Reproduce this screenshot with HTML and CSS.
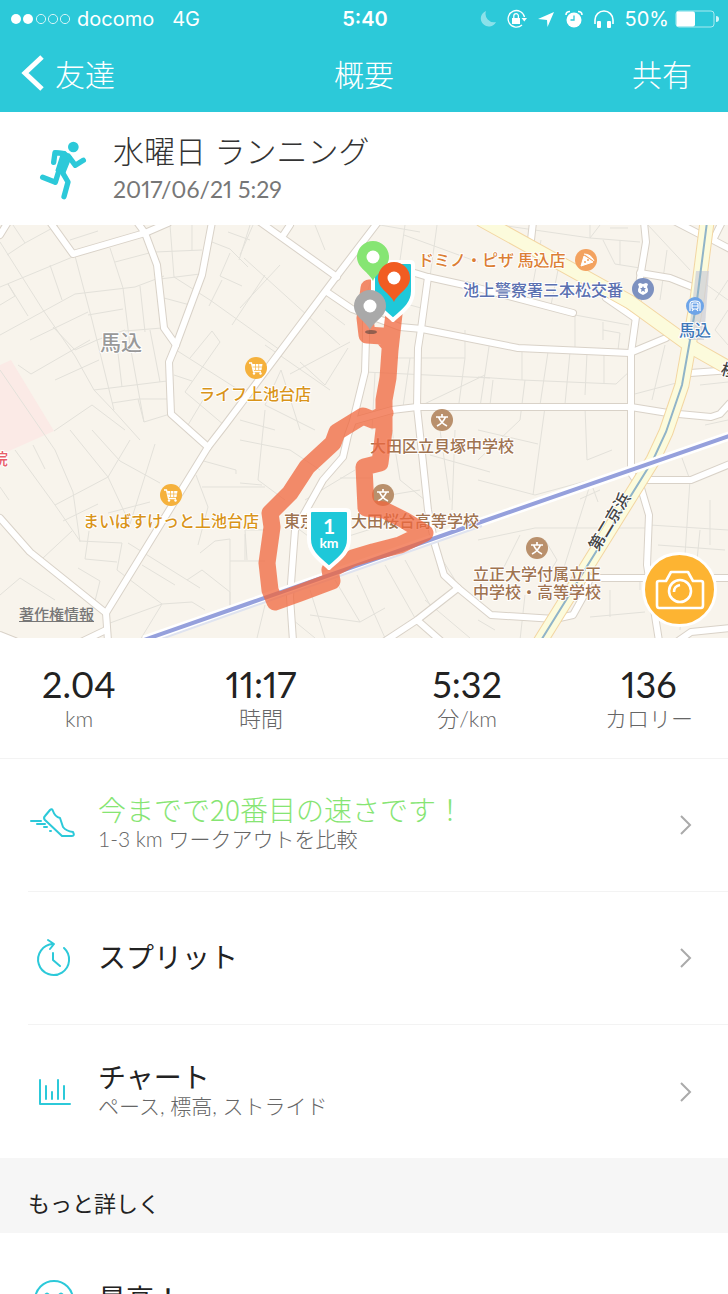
FILE: index.html
```
<!DOCTYPE html>
<html lang="ja">
<head>
    <meta charset="UTF-8">
    <meta name="viewport" content="width=device-width, initial-scale=1.0">
    <title>概要</title>
    <link rel="stylesheet" href="styles.css">
</head>
<body>

    <header class="top-bar">
        <div class="status-bar">
            <div class="status-left">
                <svg class="signal" width="60" height="12" viewBox="0 0 60 12">
                    <circle cx="5" cy="6" r="5" fill="#fff"/>
                    <circle cx="17" cy="6" r="5" fill="#fff"/>
                    <g fill="none" stroke="#fff" stroke-width="1" opacity="0.8">
                        <circle cx="30" cy="6" r="4.6"/>
                        <circle cx="42" cy="6" r="4.6"/>
                        <circle cx="54" cy="6" r="4.6"/>
                    </g>
                </svg>
                <span class="carrier">docomo</span>
                <span>4G</span>
            </div>
            <div class="status-time">5:40</div>
            <div class="status-right">
                <svg width="18" height="20" viewBox="0 0 18 20">
                    <path d="M7 2 A8 8 0 1 0 17 13 A8.500 8.500 0 0 1 7 2 Z" fill="#fff" opacity="0.45"/>
                </svg>
                <svg width="20" height="20" viewBox="0 0 20 20" fill="none" stroke="#fff" stroke-width="1.300">
                    <path d="M17.500 8 A8.300 8.300 0 1 0 15 16"/>
                    <path d="M14.500 9 H20 L17.300 12.500 Z" fill="#fff" stroke="none"/>
                    <rect x="5" y="9" width="8" height="6" fill="#fff" stroke="none"/>
                    <path d="M6.800 9 V7 a2.300 2.300 0 0 1 4.600 0 V9"/>
                </svg>
                <svg width="18" height="20" viewBox="0 0 18 20">
                    <path d="M17 3 L10.500 18 L10 11 L1 10 Z" fill="#fff"/>
                </svg>
                <svg width="18" height="20" viewBox="0 0 18 20">
                    <circle cx="9" cy="11" r="7.500" fill="#fff"/>
                    <path d="M1 6 Q1 2.500 5 2.500 M17 6 Q17 2.500 13 2.500" fill="none" stroke="#fff" stroke-width="1.600"/>
                    <path d="M9 6.500 V11 H5.500" fill="none" stroke="#2cc9d9" stroke-width="1.300"/>
                </svg>
                <svg width="22" height="20" viewBox="0 0 22 20">
                    <path d="M2 15 V11 a9 9 0 0 1 18 0 V15" fill="none" stroke="#fff" stroke-width="1.600"/>
                    <rect x="4" y="12" width="4" height="7" rx="1" fill="#fff"/>
                    <rect x="14" y="12" width="4" height="7" rx="1" fill="#fff"/>
                </svg>
                <span>50%</span>
                <svg width="44" height="18" viewBox="0 0 44 18">
                    <rect x="1" y="1" width="38" height="16" rx="3" fill="none" stroke="#fff" stroke-opacity="0.6"/>
                    <rect x="1.500" y="1.500" width="18.500" height="15" rx="2" fill="#fff"/>
                    <path d="M41 6 a3 3 0 0 1 0 6 Z" fill="#fff" opacity="0.8"/>
                </svg>
            </div>
        </div>
        <nav class="nav-bar">
            <a class="back" href="#">
                <svg width="24" height="38" viewBox="0 0 24 38">
                    <path d="M21 3 L4 19 L21 35" fill="none" stroke="#fff" stroke-width="5"/>
                </svg>
                友達
            </a>
            <h1>概要</h1>
            <button class="share" type="button">共有</button>
        </nav>
    </header>

    <main>
        <section class="workout">
            <svg class="runner" width="50" height="62" viewBox="114 420 150 186">
                <circle cx="220" cy="441" r="16" fill="#2cc9d9"/>
                <path d="M166 451 L196 453 L216 470 L196 520 L166 512 L182 462 Z" fill="#2cc9d9"/>
                <g fill="none" stroke="#2cc9d9" stroke-width="16" stroke-linecap="round" stroke-linejoin="round">
                    <path d="M161 487 L165 458 L190 461"/>
                    <path d="M205 468 L226 496 L250 481"/>
                    <path d="M182 508 L204 546 L192 590"/>
                    <path d="M178 508 L166 547 L128 532"/>
                </g>
            </svg>
            <div class="workout-text">
                <h2>水曜日 ランニング</h2>
                <p>2017/06/21 5:29</p>
            </div>
        </section>

        <section class="map">
            <svg class="map-canvas" viewBox="0 225 728 413" preserveAspectRatio="xMidYMid slice">
                <defs>
                    <g id="cart">
                        <circle r="11" fill="#f5b13c"/>
                        <path d="M-7 -5 H-4.500 L-2.500 3.500 H5" fill="none" stroke="#fff" stroke-width="1.300"/>
                        <path d="M-4 -4 H6.500 L5.500 2 H-2.700 Z" fill="#fff"/>
                        <path d="M-3.500 -1 H6 M-0.500 -4 V2 M2.700 -4 V2" stroke="#f5b13c" stroke-width="0.700"/>
                        <circle cx="-2" cy="5.500" r="1.200" fill="#fff"/>
                        <circle cx="4.500" cy="5.500" r="1.200" fill="#fff"/>
                    </g>
                    <g id="school">
                        <circle r="11" fill="#b9906c"/>
                        <path d="M-6 -3 H6 M0 -6 V-3 M-3.500 -3 Q-1 3 5 6 M3.500 -3 Q1 3 -5 6" fill="none" stroke="#fff" stroke-width="1.700"/>
                    </g>
                    <g id="pin">
                        <path d="M0 24 C-4 15 -16 11 -16 0 A16 16 0 0 1 16 0 C16 11 4 15 0 24 Z"/>
                        <circle r="6.500" fill="#fff"/>
                    </g>
                    <path id="shield" d="M-17 -30 H17 Q20 -30 20 -27 V-1 C20 14 7 21 0 28 C-7 21 -20 14 -20 -1 V-27 Q-20 -30 -17 -30 Z" fill="#1ec8d9" stroke="#fff" stroke-width="4" stroke-linejoin="round"/>

                    <!-- main streets, drawn twice for casing and fill -->
                    <g id="streets">
                        <path d="M50 222 L73 254 L145 233 L168 223"/>
                        <path d="M137 222 L145 233 L157 265 L164 328 L176 345"/>
                        <path d="M212 222 L202 275 L176 345 L169 362 L171 414 L208 447"/>
                        <path d="M378 222 L336 277 L225 425 L208 447 L106 613 L108 641"/>
                        <path d="M0 518 L30 552 L106 613 M106 630 L83 641 M8 222 L0 235 M0 635 L15 641"/>
                        <path d="M260 222 L337 277 M290 225 L282 237"/>
                        <path d="M327 292 L352 309 L400 327 L422 329 L518 348 L630 353 L666 338"/>
                        <path d="M395 267 L428 277 L478 288 L573 313"/>
                        <path d="M428 277 L421 329 L418 348 L417 407 L420 435 L428 510 L435 545 L444 575 L458 588 L491 615 L555 619 L573 615 L583 597 L590 578 H728"/>
                        <path d="M458 588 L417 620 L385 641 M417 620 L441 641"/>
                        <path d="M366 300 V338 L365 372 L353 421 L348 435 L343 457 L323 480 L295 530 L290 597 L293 641"/>
                        <path d="M353 421 L392 410 L417 407 H631 L668 413 L711 417 L720 414 L730 403"/>
                        <path d="M644 222 L646 242 L640 278 L636 317 L631 353 V473 L641 488 L649 515 L647 565 L659 641"/>
                        <path d="M606 298 L635 318 M640 273 L670 278 L695 288 M531 240 L533 222"/>
                        <path d="M676 222 L705 237 M722 222 L713 240 L730 249 M690 373 L730 370"/>
                        <path d="M648 480 H691 L730 464 M678 641 L691 632 L730 628"/>
                    </g>
                    <g id="highways">
                        <path d="M482 220 L630 302 L695 349 L732 370"/>
                        <path d="M707 222 L697 300 L690 340 L682 385 L666 432 L653 460 L540 642"/>
                    </g>
                </defs>

                <rect x="0" y="225" width="728" height="413" fill="#f8f4ec"/>
                <path d="M0 365 L11 360 L54 431 L0 455 Z" fill="#fbeae6"/>

                <g class="lanes">
                    <path d="M7 255 L25 243 L58 225 M13 225 L25 243 M0 242 L43 310 L75 356 L94 390 L113 410 L140 440 M0 287 L75 256 M50 265 L62 300 M75 256 L92 320 L114 410"/>
                    <path d="M0 335 L75 294 L135 287 L164 276 M0 305 L15 296 L8 284 M8 284 L28 316 M30 340 L88 312 M53 327 L75 350 L97 340 L125 330 M110 248 L123 288 L130 345 L144 422 M70 240 L98 231"/>
                    <path d="M115 262 L153 252 M88 315 L123 309 M140 286 L145 332 M125 331 L162 328 M150 330 L160 382 M55 380 L99 360 M18 365 L31 374 L90 340 M94 390 L167 381 M117 345 L122 387 M112 403 L138 399 L144 422 L170 414 M138 399 L167 399"/>
                    <path d="M170 225 L174 277 M192 225 V250 M155 252 L202 250 M160 279 L200 274 M174 277 L210 300 L280 350 M164 298 L190 305 M212 242 L230 249 L248 267 M230 253 L220 276 L242 286 M222 280 L209 306 M250 225 L239 260 M232 325 L265 275 M228 232 L250 240"/>
                    <path d="M176 350 L250 397 M190 358 L212 331 L220 342 L185 392 L224 425 M174 375 L192 381 M185 430 L203 400 M0 370 L55 450 L73 492 L80 542 M15 450 L55 505 L80 541 L122 543 M55 505 L108 477 L130 440 M54 431 L92 405 L125 430"/>
                    <path d="M33 445 L45 469 M0 487 L9 500 M63 521 L98 504 M70 430 L108 477 L130 524 L155 444 M92 430 L120 461 L160 483 M108 513 L150 502 M43 558 L72 531 M89 531 L85 559 L117 562 M78 568 L100 581 L94 605 M122 543 L117 570 L162 604 L192 602 L205 610"/>
                    <path d="M142 565 L175 585 M128 543 L200 588 M187 580 L202 570 L230 592 V605 M200 553 L215 541 L230 539 V608 M230 561 H265 M245 534 V560 M196 475 L208 507 L198 545 M202 487 H265 M200 460 L236 470 V474 M110 623 L162 604 L140 640 M0 595 L20 578 L55 600"/>
                    <path d="M240 308 L280 265 M244 258 L340 345 M253 225 L240 255 M265 225 L330 270 M265 345 L330 390 M290 374 L350 342 M348 348 L325 385 L300 362 M300 430 L281 370 M281 370 L265 405 L315 430 M240 420 L275 430 M345 325 L325 310 M315 225 L325 250"/>
                    <path d="M405 225 L400 260 M437 225 L430 277 M404 235 L478 262 M380 225 L420 232 M373 275 L361 310 M410 305 L421 308 M395 358 H465 M365 372 L490 378 M418 407 L485 375 M465 330 V358 L459 403 M372 430 L375 373 M480 407 L490 340 M410 358 L403 407"/>
                    <path d="M500 225 L590 238 L640 242 M590 225 V238 M610 228 H628 M620 240 V265 M603 240 L615 264 L640 268 M590 238 L600 225 M541 240 L530 300 M560 260 L550 310 M575 315 L629 325 M603 322 V340 M603 330 L620 333 L618 350 M575 313 V350"/>
                    <path d="M478 377 L522 380 L616 384 L631 370 M522 350 V380 M548 352 L540 405 M570 352 L565 404 M587 353 L585 395 M604 354 V384 M490 405 L493 380 M525 380 L520 420 L478 460 M545 407 L533 495 M585 407 L587 460 L612 450 M631 395 L680 382 M665 345 L652 400"/>
                    <path d="M715 300 L728 280 M660 300 L667 250 M648 225 L690 270 M700 280 L728 300 M728 310 L715 330 L728 345 M700 385 L728 382 M705 425 L728 420 M682 458 L690 480 L680 630 M650 525 L728 530 M710 500 V545 M700 530 L695 580 M658 545 L725 550"/>
                    <path d="M478 540 L535 528 H645 M478 480 L535 495 L590 480 L598 502 M590 485 L560 580 M520 535 L500 575 M545 540 L557 560 L545 580 M580 499 L600 490 M478 430 L538 444 M525 595 L520 640 M610 590 V617 M590 617 L645 612 M640 578 V590 M478 620 L495 630"/>
                    <path d="M240 440 L290 450 L320 470 M265 410 L258 480 L285 500 M240 483 L262 485 M305 500 L355 470 M340 478 H372 M378 497 L420 490 M392 430 L400 480 L425 500 M440 430 L450 500 M455 430 L452 510 M430 455 L490 472 M300 530 L320 545 L400 520"/>
                    <path d="M247 560 L245 530 H265 M310 590 L325 638 M335 580 L360 622 L310 615 M357 575 L385 638 M385 565 L415 618 M405 560 L430 605 M435 548 L455 580 M293 620 L315 638 M265 605 L257 638 M360 622 L385 608 M425 600 L470 638"/>
                </g>

                <use href="#streets" class="street-casing"/>
                <use href="#streets" class="street-fill"/>
                <use href="#highways" class="highway-casing"/>
                <use href="#highways" class="highway-fill"/>
                <path d="M696 271 H709 L704 340 H688 Z" fill="#cfd0d8" opacity="0.75"/>
                <path d="M707 222 L697 300 L690 340 L682 385 L666 432 L653 460 L540 642" fill="none" stroke="#90b4c8" stroke-width="2"/>

                <path d="M144 640 L250 603 L478 523 L732 435" fill="none" stroke="#fff" stroke-width="9"/>
                <path d="M150 643 L254 606 L482 526" fill="none" stroke="#dfe3ef" stroke-width="2"/>
                <path d="M144 640 L250 603 L478 523 L732 435" fill="none" stroke="#95a0dc" stroke-width="4"/>

                <use href="#cart" x="256" y="368"/>
                <use href="#cart" x="171" y="495"/>
                <use href="#school" x="442" y="420"/>
                <use href="#school" x="383" y="495"/>
                <use href="#school" x="537" y="548"/>
                <g transform="translate(586 260)">
                    <circle r="11" fill="#f3a25f"/>
                    <path d="M-5 6 L-2 -4 L7 2 Z M-2 -6 Q5 -6 8 1" fill="#fff" stroke="#fff" stroke-width="1"/>
                    <circle cx="-1" cy="2" r="1" fill="#f3a25f"/>
                    <circle cx="2" cy="0" r="1" fill="#f3a25f"/>
                </g>
                <g transform="translate(643 289)">
                    <circle r="11" fill="#7d91c0"/>
                    <path d="M-5 -5 L-3 -6 L0 -5 L3 -6 L5 -5 L4 -2 Q7 3 2 5 L0 6 L-2 5 Q-7 3 -4 -2 Z" fill="#fff"/>
                    <path d="M0 -3 L1 -1 L3 -1 L1.500 0.500 L2 3 L0 1.700 L-2 3 L-1.500 0.500 L-3 -1 L-1 -1 Z" fill="#7d91c0"/>
                </g>
                <g transform="translate(695 306)">
                    <circle r="9" fill="#6da4e8"/>
                    <path d="M-5 5 V-2 Q-5 -5 0 -5 Q5 -5 5 -2 V5 M-3 5 L-1.500 3 M3 5 L1.500 3" fill="none" stroke="#fff" stroke-width="1.200"/>
                    <rect x="-3" y="-3" width="6" height="6" rx="1" fill="none" stroke="#fff" stroke-width="1.200"/>
                    <path d="M-3 0 H3" stroke="#fff"/>
                </g>

                <g class="place">
                    <text x="418" y="266" fill="#dc7f35">ドミノ・ピザ 馬込店</text>
                    <text x="463" y="296" fill="#5b70b0">池上警察署三本松交番</text>
                    <text x="679" y="336" fill="#3f78b8">馬込</text>
                    <text x="199" y="400" fill="#d99419">ライフ上池台店</text>
                    <text x="83" y="527" fill="#d99419">まいばすけっと上池台店</text>
                    <text x="370" y="452" fill="#9f7350">大田区立貝塚中学校</text>
                    <text x="284" y="527" fill="#9f7350">東京</text>
                    <text x="351" y="527" fill="#9f7350">大田桜台高等学校</text>
                    <text x="473" y="580" fill="#9f7350">立正大学付属立正</text>
                    <text x="473" y="598" fill="#9f7350">中学校・高等学校</text>
                    <text x="-8" y="465" fill="#e8606a">院</text>
                    <text transform="translate(598 552) rotate(-59)" fill="#444">第二京浜</text>
                    <text transform="translate(720 374) rotate(15)" fill="#444">桜</text>
                    <text class="district" x="100" y="350">馬込</text>
                </g>

                <path class="route" d="M369 288 L365 318 L367 335 L382 336 L390 345 L394 314 L390 350 L388 378 L384 400 V430 L380 463 L364 467 L366 508 L384 510 L404 520 L425 533 L400 545 L373 552 L353 558 L330 570 L332 581 L300 593 L275 602 L270 590 L267 563 L272 527 L270 513 L290 493 L307 467 L333 443 L337 432 L350 424 L363 416 L373 420 L385 413"/>

                <use href="#shield" x="393" y="292"/>
                <use href="#pin" x="373" y="257" fill="#86e573"/>
                <use href="#pin" x="394" y="278" fill="#f15c22"/>
                <ellipse cx="371" cy="332" rx="6" ry="2" fill="#333" opacity="0.5"/>
                <use href="#pin" x="370" y="306" fill="#a9a9a9"/>
                <use href="#shield" x="329" y="540"/>
                <text class="km-number" x="329" y="534">1</text>
                <text class="km-unit" x="329" y="548">km</text>
            </svg>
            <a class="legal" href="#">著作権情報</a>
            <button class="camera" type="button" aria-label="写真を追加">
                <svg width="50" height="44" viewBox="0 0 50 44" fill="none" stroke="#fff" stroke-width="2.600" stroke-linejoin="round">
                    <path d="M4 13 H11 L16 4 H33 L38 13 H46 Q48 13 48 15 V37 Q48 40 46 40 H4 Q2 40 2 37 V15 Q2 13 4 13 Z"/>
                    <circle cx="25" cy="23" r="11"/>
                    <path d="M19 24 Q19 18 25 17"/>
                </svg>
            </button>
        </section>

        <dl class="stats">
            <div><dd>2.04</dd><dt>km</dt></div>
            <div><dd>11:17</dd><dt>時間</dt></div>
            <div><dd>5:32</dd><dt>分/km</dt></div>
            <div><dd>136</dd><dt>カロリー</dt></div>
        </dl>

        <div class="rows">
            <a class="row" href="#">
                <svg class="row-icon" viewBox="0 0 50 50">
                    <path d="M22 10 Q24 8 25 11 Q27 17 32 18 L35 27 Q38 31 45 32 Q47 36 44 36 H34 L17 20 Q15 18 17 16 Z M3 21 H13 M9 24 H17 M16 27 H19 M22 31 H23"/>
                </svg>
                <span class="row-text">
                    <span class="row-title green">今までで20番目の速さです！</span>
                    <span class="row-sub">1-3 km ワークアウトを比較</span>
                </span>
                <svg class="chevron" viewBox="0 0 14 22"><path d="M2 2 L11 11 L2 20"/></svg>
            </a>
            <a class="row" href="#">
                <svg class="row-icon" viewBox="0 0 50 50">
                    <path d="M36 15 A15.500 15.500 0 1 1 25 11 M20 7 L26 11 L22 16 M25 20 V27 L32 33"/>
                </svg>
                <span class="row-text">
                    <span class="row-title">スプリット</span>
                </span>
                <svg class="chevron" viewBox="0 0 14 22"><path d="M2 2 L11 11 L2 20"/></svg>
            </a>
            <a class="row" href="#">
                <svg class="row-icon" viewBox="0 0 50 50">
                    <path d="M12 13 V37 H42 M18 19 V32 M24 25 V32 M30 13 V32 M36 19 V32"/>
                </svg>
                <span class="row-text">
                    <span class="row-title">チャート</span>
                    <span class="row-sub">ペース, 標高, ストライド</span>
                </span>
                <svg class="chevron" viewBox="0 0 14 22"><path d="M2 2 L11 11 L2 20"/></svg>
            </a>
        </div>

        <h3 class="section-title">もっと詳しく</h3>

        <div class="rows">
            <a class="row" href="#">
                <svg class="row-icon" viewBox="0 0 50 50">
                    <circle cx="26" cy="25" r="19"/>
                    <path d="M17 20 Q19 17 21 20 M31 20 Q33 17 35 20 M16 30 Q26 40 36 30"/>
                </svg>
                <span class="row-text">
                    <span class="row-title">最高！</span>
                </span>
            </a>
        </div>
    </main>

</body>
</html>
```
FILE: styles.css
```
* {
    box-sizing: border-box;
}
body {
    margin: 0;
    height: 100vh;
    display: flex;
    flex-direction: column;
    background: #fff;
    color: #222;
    font-family: Lato, "Noto Sans CJK JP", sans-serif;
    font-weight: 300;
}
h1, h2, h3, p, dl, dd {
    margin: 0;
    font-weight: 300;
}
a {
    color: inherit;
    text-decoration: none;
}
button {
    padding: 0;
    border: none;
    background: none;
    color: inherit;
    font: inherit;
    cursor: pointer;
}
svg {
    display: block;
    flex-shrink: 0;
}

/* header */
.top-bar {
    flex-shrink: 0;
    background: #2cc9d9;
    color: #fff;
}
.status-bar {
    display: grid;
    grid-template-columns: 1fr auto 1fr;
    align-items: center;
    height: 37px;
    padding: 0 9px 0 11px;
    font-family: Inter, sans-serif;
    font-size: 20px;
    font-weight: 400;
}
.status-left, .status-right {
    display: flex;
    align-items: center;
}
.status-left {
    gap: 6px;
}
.carrier {
    margin-right: 12px;
}
.status-time {
    font-weight: 600;
}
.status-right {
    justify-content: flex-end;
    gap: 10px;
}
.status-right span {
    margin-right: -4px;
}
.nav-bar {
    display: grid;
    grid-template-columns: 1fr auto 1fr;
    align-items: center;
    height: 75px;
    padding: 0 36px 4px;
    font-size: 30px;
}
.nav-bar h1 {
    font-size: 30px;
}
.back {
    display: flex;
    align-items: center;
    gap: 10px;
    margin-left: -15px;
}
.share {
    justify-self: end;
}

main {
    flex: 1;
    overflow-y: auto;
    scrollbar-width: none;
}

/* workout title */
.workout {
    display: flex;
    align-items: flex-start;
    gap: 25px;
    height: 113px;
    padding: 20px 38px;
}
.runner {
    margin-top: 8px;
}
.workout-text h2 {
    font-size: 31px;
    line-height: 38px;
    color: #333;
}
.workout-text p {
    font-size: 23px;
    line-height: 38px;
    font-weight: 400;
    font-variant-numeric: proportional-nums;
    color: #777;
}

/* map */
.map {
    position: relative;
    height: 413px;
}
.map-canvas {
    width: 100%;
    height: 100%;
}
.lanes {
    fill: none;
    stroke: #e3e1da;
    stroke-width: 1;
}
.street-casing, .street-fill, .highway-casing, .highway-fill, .route {
    fill: none;
    stroke-linecap: round;
    stroke-linejoin: round;
}
.street-casing {
    stroke: #d9d2c8;
    stroke-width: 8;
}
.street-fill {
    stroke: #fff;
    stroke-width: 6;
}
.highway-casing {
    stroke: #f3d6a2;
    stroke-width: 15;
}
.highway-fill {
    stroke: #fcfbdc;
    stroke-width: 13;
}
.route {
    stroke: #f0673d;
    stroke-opacity: 0.75;
    stroke-width: 17;
}
.place {
    font-family: "Noto Sans CJK JP", sans-serif;
    font-size: 16px;
    font-weight: 500;
    stroke: #fff;
    stroke-width: 2;
    stroke-linejoin: round;
    paint-order: stroke;
}
.district {
    font-size: 21px;
    fill: #999;
}
.km-number, .km-unit {
    fill: #fff;
    font-weight: 700;
    text-anchor: middle;
}
.km-number {
    font-size: 21px;
}
.km-unit {
    font-size: 14px;
}
.legal {
    position: absolute;
    left: 19px;
    bottom: 14px;
    font-size: 15px;
    font-weight: 500;
    line-height: 20px;
    color: #777;
    text-decoration: underline;
}
.camera {
    position: absolute;
    right: 11px;
    bottom: 11px;
    display: flex;
    align-items: center;
    justify-content: center;
    width: 75px;
    height: 75px;
    border: 3px solid #fff;
    border-radius: 50%;
    background: #fdb432;
}

/* totals */
.stats {
    display: grid;
    grid-template-columns: 158fr 206fr 206fr 158fr;
    height: 121px;
    padding-top: 26px;
    border-bottom: 1px solid #f3f3f3;
    text-align: center;
}
.stats dd {
    font-size: 36px;
    line-height: 40px;
    font-weight: 400;
    font-variant-numeric: proportional-nums;
}
.stats dt {
    font-size: 22px;
    line-height: 30px;
    color: #666;
}

/* detail rows */
.row {
    display: flex;
    align-items: center;
    gap: 20px;
    height: 133px;
    margin-left: 28px;
    padding-right: 35px;
    border-bottom: 1px solid #f3f3f3;
}
.row:last-child {
    border-bottom: none;
}
.row-icon {
    width: 50px;
    height: 50px;
    fill: none;
    stroke: #2cc9d9;
    stroke-width: 2;
    stroke-linecap: round;
    stroke-linejoin: round;
}
.row-text {
    flex: 1;
    display: flex;
    flex-direction: column;
    margin-bottom: 4px;
}
.row-title {
    font-family: "Noto Sans CJK JP", sans-serif;
    font-size: 28px;
    line-height: 32px;
    font-weight: 400;
}
.row-sub {
    font-size: 21px;
    line-height: 28px;
    color: #666;
}
.green {
    color: #86e573;
    font-weight: 300;
}
.chevron {
    width: 14px;
    height: 22px;
    fill: none;
    stroke: #aaa;
    stroke-width: 2;
}
.section-title {
    height: 75px;
    padding: 28px 28px 0;
    background: #f6f6f6;
    font-size: 22px;
    line-height: 36px;
    font-weight: 400;
}
```
